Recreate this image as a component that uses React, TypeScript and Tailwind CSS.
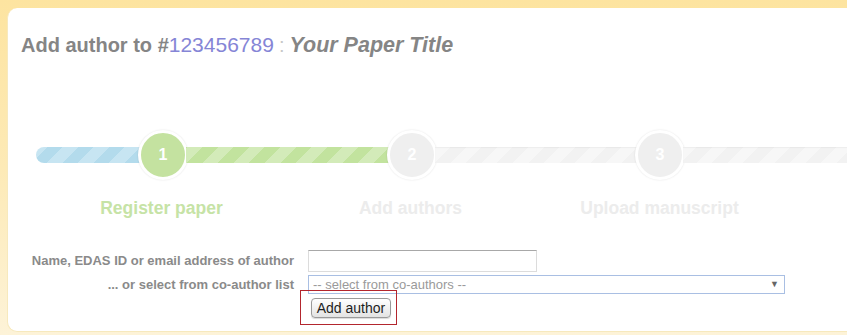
import React from "react";

const Circle = ({ n, active }: { n: number; active?: boolean }) => (
  <div
    className={`size-[50px] shrink-0 rounded-full flex items-center justify-center text-[16px] font-bold text-white border-[3px] border-white shadow-[0_0_2px_rgba(0,0,0,0.12)] ${
      active ? "bg-[#c4e2a0]" : "bg-[#efefef]"
    }`}
  >
    {n}
  </div>
);

const StepLabel = ({ children, active }: { children: React.ReactNode; active?: boolean }) => (
  <div
    className={`w-[249px] shrink-0 text-center text-[17.5px] font-bold leading-5 ${
      active ? "text-[#c6e3a6]" : "text-[#ececec]"
    }`}
  >
    {children}
  </div>
);

export default function App() {
  return (
    <div
      className="w-[847px] h-[335px] overflow-hidden pl-[7px] pt-[8px] bg-[linear-gradient(180deg,#fde4a0_0%,#fdeab6_50%,#fdf3d8_100%)]"
      style={{ fontFamily: '"Liberation Sans", Arial, sans-serif' }}
    >
      <div className="w-[860px] h-[324px] bg-white rounded-l-[10px] border-l border-b border-[#f7e9bd] flex flex-col">
        <h1 className="mt-[25px] ml-[13px] text-[20px] leading-6 font-bold text-[#858585] whitespace-nowrap">
          Add author to #<span className="font-normal text-[21px] text-[#8585d6]">123456789</span>
          <span className="font-normal mx-[5px] text-[#c8c8c8]">:</span>
          <span className="italic text-[21.5px]">Your Paper Title</span>
        </h1>

        <div className="mt-[73px] ml-[28px] flex items-center">
          <div className="w-[104px] h-4 shrink-0 -mr-[2px] rounded-l-full bg-[repeating-linear-gradient(-45deg,#b3dbec_0_11px,#c7e5f2_11px_22px)]" />
          <Circle n={1} active />
          <div className="w-[203px] h-4 shrink-0 -mx-[2px] bg-[repeating-linear-gradient(-45deg,#c2e39e_0_11px,#d3ebb9_11px_22px)]" />
          <Circle n={2} />
          <div className="w-[202px] h-4 shrink-0 -mx-[2px] bg-[repeating-linear-gradient(-45deg,#f2f2f2_0_11px,#f7f7f7_11px_22px)] shadow-[inset_0_1px_1px_rgba(0,0,0,0.04)]" />
          <Circle n={3} />
          <div className="w-[200px] h-4 shrink-0 -ml-[2px] bg-[repeating-linear-gradient(-45deg,#f2f2f2_0_11px,#f7f7f7_11px_22px)] shadow-[inset_0_1px_1px_rgba(0,0,0,0.04)]" />
        </div>

        <div className="mt-[18px] ml-[29px] flex">
          <StepLabel active>Register paper</StepLabel>
          <StepLabel>Add authors</StepLabel>
          <StepLabel>Upload manuscript</StepLabel>
        </div>

        <div className="mt-[32px] flex flex-col gap-[3px] text-[13px]">
          <div className="flex items-center">
            <label className="w-[286px] text-right font-bold text-[#8a8a8a]">
              Name, EDAS ID or email address of author
            </label>
            <input
              type="text"
              className="ml-[14px] w-[229px] h-[22px] border border-[#dcdcdc] border-t-[#a8a8a8] outline-none"
            />
          </div>
          <div className="flex items-center">
            <label className="w-[286px] text-right font-bold text-[#8a8a8a]">
              ... or select from co-author list
            </label>
            <div className="ml-[14px] relative w-[477px] h-[19px]">
              <select className="appearance-none w-full h-full border border-[#a9bfe3] bg-white pl-[4px] text-[13px] leading-none text-[#9a9a9a] outline-none">
                <option>-- select from co-authors --</option>
              </select>
              <span className="absolute right-[6px] top-[3px] text-[9px] text-[#666] pointer-events-none">▼</span>
            </div>
          </div>
          <div className="flex">
            <div className="ml-[303px] relative">
              <button className="w-[80px] h-[20px] rounded-[4px] border border-[#9a9a9a] bg-[linear-gradient(180deg,#ffffff,#e3e3e3)] text-[14px] text-[#1e1e1e] leading-none shadow-[0_1px_1px_rgba(0,0,0,0.15)]">
                Add author
              </button>
              <div className="absolute -left-[11px] -top-[8px] w-[97px] h-[35px] border border-[#b3262e] pointer-events-none" />
            </div>
          </div>
        </div>
      </div>
    </div>
  );
}
